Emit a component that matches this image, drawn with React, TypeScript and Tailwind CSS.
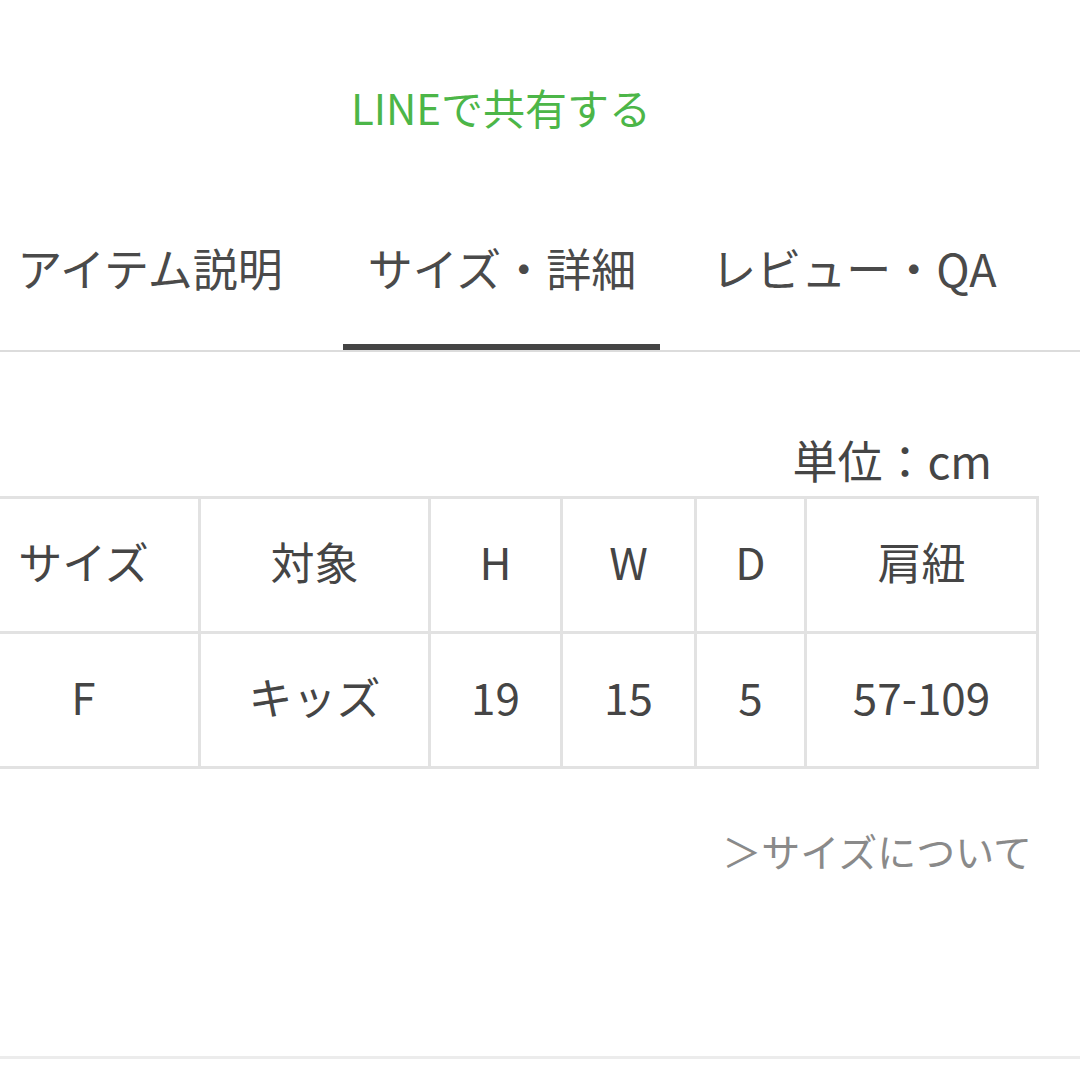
import React from "react";

const font = { fontFamily: '"Noto Sans CJK JP", "Noto Sans", sans-serif' };

export default function App() {
  const cols = [
    { w: 232, h: "サイズ", v: "F" },
    { w: 230, h: "対象", v: "キッズ" },
    { w: 132, h: "H", v: "19" },
    { w: 134, h: "W", v: "15" },
    { w: 110, h: "D", v: "5" },
    { w: 232, h: "肩紐", v: "57-109" },
  ];
  return (
    <div className="w-[1080px] h-[1080px] bg-white overflow-hidden relative text-[#454545]" style={font}>
      <div className="h-[214px] flex justify-center pt-[80px] pr-[78px]">
        <div className="text-[42px] leading-[54px] text-[#4cb648]">LINEで共有する</div>
      </div>
      <div className="flex ml-[-26px] h-[136px]">
        {["アイテム説明", "サイズ・詳細", "レビュー・QA"].map((t, i) => (
          <div key={t} className="w-[352px] shrink-0 flex flex-col items-center">
            <div className="text-[45px] leading-[60px] mt-[24px] text-[#4a4a4a]">{t}</div>
            <div className="flex-1" />
            {i === 1 ? <div className="w-[317px] h-[6px] bg-[#444] ml-[-2px]" /> : <div className="h-[6px]" />}
          </div>
        ))}
      </div>
      <div className="h-[2px] bg-[#dcdcdc]" />
      <div className="flex justify-end pr-[88px] mt-[82px] h-[52px]">
        <div className="text-[45px] leading-[52px]">単位：cm</div>
      </div>
      <div className="ml-[-34px] mt-[10px]">
        <table className="border-collapse">
          <tbody>
            <tr className="h-[135px]">
              {cols.map((c) => (
                <td key={c.h} style={{ width: c.w }} className="border-[3px] border-[#e2e2e2] text-center text-[44px] leading-[50px] p-0 pb-[8px]">
                  {c.h}
                </td>
              ))}
            </tr>
            <tr className="h-[135px]">
              {cols.map((c) => (
                <td key={c.h} style={{ width: c.w }} className="border-[3px] border-[#e2e2e2] text-center text-[44px] leading-[50px] p-0 pb-[8px]">
                  {c.v}
                </td>
              ))}
            </tr>
          </tbody>
        </table>
      </div>
      <div className="flex justify-end pr-[48px] mt-[56px]">
        <div className="text-[39px] leading-[50px] text-[#8a8a8a]">＞サイズについて</div>
      </div>
      <div className="absolute left-0 right-0 top-[1056px] h-[3px] bg-[#ececec]" />
    </div>
  );
}
